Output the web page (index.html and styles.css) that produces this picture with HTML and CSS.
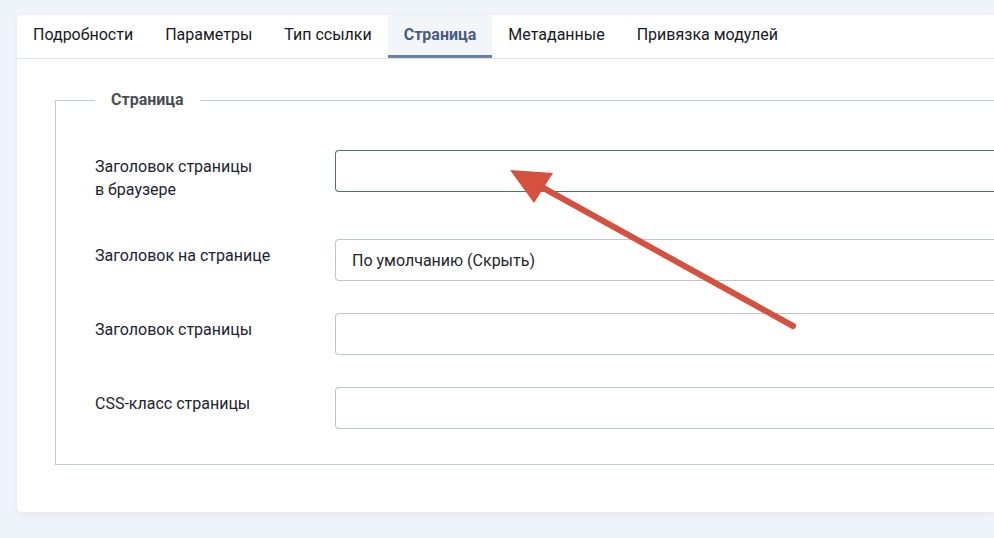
FILE: index.html
```html
<!DOCTYPE html>
<html lang="ru">
<head>
  <meta charset="UTF-8">
  <meta name="viewport" content="width=device-width, initial-scale=1.0">
  <title>Страница</title>
  <link rel="stylesheet" href="styles.css">
</head>
<body>
  <div class="card">
    <ul class="tabs">
      <li class="tab">Подробности</li>
      <li class="tab">Параметры</li>
      <li class="tab">Тип ссылки</li>
      <li class="tab active">Страница</li>
      <li class="tab">Метаданные</li>
      <li class="tab">Привязка модулей</li>
    </ul>

    <div class="tab-panel">
      <fieldset class="options">
        <legend>Страница</legend>

        <div class="control-row tall">
          <label for="browser-title">Заголовок страницы<br>в браузере</label>
          <input type="text" id="browser-title" class="form-control valid">
        </div>

        <div class="control-row">
          <label for="show-heading">Заголовок на странице</label>
          <div class="form-control select" id="show-heading">По умолчанию (Скрыть)</div>
        </div>

        <div class="control-row">
          <label for="page-heading">Заголовок страницы</label>
          <input type="text" id="page-heading" class="form-control">
        </div>

        <div class="control-row">
          <label for="page-class">CSS-класс страницы</label>
          <input type="text" id="page-class" class="form-control">
        </div>
      </fieldset>
    </div>
  </div>

  <!-- annotation arrow over the form -->
  <svg class="arrow" width="994" height="538" viewBox="0 0 994 538">
    <line x1="793" y1="326" x2="538" y2="185" stroke="#d4503f" stroke-width="6" stroke-linecap="round"/>
    <polygon points="510,170 553,173 534,203" fill="#d4503f"/>
  </svg>
</body>
</html>
```

FILE: styles.css
```css
body {
  margin: 0;
  padding: 15px 0 0 17px;
  background-color: #eff3fa;
  font-family: Roboto, "Liberation Sans", sans-serif;
  font-size: 16px;
  overflow: hidden;
  height: 538px;
  box-sizing: border-box;
}

.card {
  background-color: #fff;
  border-radius: 5px 0 0 5px;
  box-shadow: 0 2px 6px rgba(40, 70, 120, 0.06);
}

.tabs {
  display: flex;
  margin: 0;
  padding: 0;
  list-style: none;
  border-bottom: 1px solid #dde5ee;
}

.tab {
  padding: 9px 16px;
  line-height: 22px;
  color: #16191d;
  border-bottom: 3px solid transparent;
}

.tab.active {
  background-color: #f3f6f9;
  border-bottom-color: #6a82a5;
  color: #485c7c;
  font-weight: 700;
}

.tab-panel {
  padding: 30px 0 47px 38px;
}

.options {
  margin: 0;
  padding: 39px 0 35px 39px;
  border: 1px solid #bccadb;
  border-right: none;
  min-inline-size: 0;
}

.options legend {
  padding: 0 16px;
  line-height: 22px;
  font-weight: 700;
  color: #4a4f56;
}

.control-row {
  display: flex;
  align-items: flex-start;
  margin-bottom: 32px;
}

.control-row:last-child {
  margin-bottom: 0;
}

.control-row label {
  flex: 0 0 240px;
  padding: 5px 0 0;
  line-height: 23px;
  color: #1d2430;
}

.control-row.tall label {
  padding-bottom: 6px;
}

.form-control {
  flex: 1;
  min-width: 0;
  box-sizing: border-box;
  height: 42px;
  margin: 0;
  padding: 0 16px;
  border: 1px solid #bac6d6;
  border-right: none;
  border-radius: 4px 0 0 4px;
  font-family: inherit;
  font-size: 16px;
  color: #22262b;
  background-color: #fff;
}

.form-control.valid {
  border-color: #447b53;
}

.form-control.select {
  display: flex;
  align-items: center;
}

.arrow {
  position: absolute;
  top: 0;
  left: 0;
  pointer-events: none;
}
```
